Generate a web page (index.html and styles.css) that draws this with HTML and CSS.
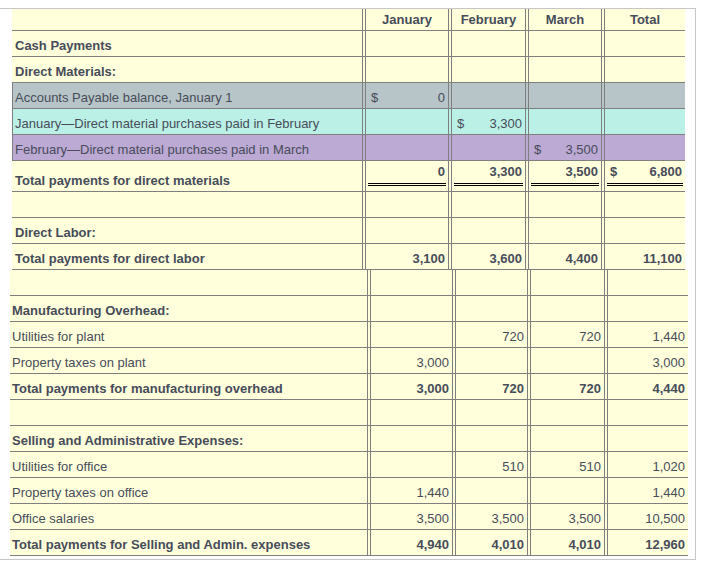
FILE: index.html
```html
<!DOCTYPE html>
<html>
<head>
<meta charset="utf-8">
<link rel="stylesheet" href="styles.css">
</head>
<body>
<div class="frame">
  <div class="tbl t1">
    <div class="row head">
      <div class="c lab"></div>
      <div class="c n jan">January</div>
      <div class="c n feb">February</div>
      <div class="c n mar">March</div>
      <div class="c n tot">Total</div>
    </div>
    <div class="row">
      <div class="c lab b">Cash Payments</div>
      <div class="c n jan"></div><div class="c n feb"></div><div class="c n mar"></div><div class="c n tot"></div>
    </div>
    <div class="row">
      <div class="c lab b">Direct Materials:</div>
      <div class="c n jan"></div><div class="c n feb"></div><div class="c n mar"></div><div class="c n tot"></div>
    </div>
    <div class="row shade gray">
      <div class="c lab">Accounts Payable balance, January 1</div>
      <div class="c n jan dol"><span>$</span><span>0</span></div>
      <div class="c n feb"></div><div class="c n mar"></div><div class="c n tot"></div>
    </div>
    <div class="row shade cyan">
      <div class="c lab">January—Direct material purchases paid in February</div>
      <div class="c n jan"></div>
      <div class="c n feb dol"><span>$</span><span>3,300</span></div>
      <div class="c n mar"></div><div class="c n tot"></div>
    </div>
    <div class="row shade purple">
      <div class="c lab">February—Direct material purchases paid in March</div>
      <div class="c n jan"></div>
      <div class="c n feb"></div>
      <div class="c n mar dol"><span>$</span><span>3,500</span></div>
      <div class="c n tot"></div>
    </div>
    <div class="row total">
      <div class="c lab b">Total payments for direct materials</div>
      <div class="c n jan b"><div class="val">0</div><div class="dbl"></div></div>
      <div class="c n feb b"><div class="val">3,300</div><div class="dbl"></div></div>
      <div class="c n mar b"><div class="val">3,500</div><div class="dbl"></div></div>
      <div class="c n tot b"><div class="val dolv"><span>$</span><span>6,800</span></div><div class="dbl"></div></div>
    </div>
    <div class="row">
      <div class="c lab"></div>
      <div class="c n jan"></div><div class="c n feb"></div><div class="c n mar"></div><div class="c n tot"></div>
    </div>
    <div class="row">
      <div class="c lab b">Direct Labor:</div>
      <div class="c n jan"></div><div class="c n feb"></div><div class="c n mar"></div><div class="c n tot"></div>
    </div>
    <div class="row">
      <div class="c lab b">Total payments for direct labor</div>
      <div class="c n jan b">3,100</div>
      <div class="c n feb b">3,600</div>
      <div class="c n mar b">4,400</div>
      <div class="c n tot b">11,100</div>
    </div>
  </div>

  <div class="tbl t2">
    <div class="row">
      <div class="c lab"></div>
      <div class="c n jan"></div><div class="c n feb"></div><div class="c n mar"></div><div class="c n tot"></div>
    </div>
    <div class="row">
      <div class="c lab b">Manufacturing Overhead:</div>
      <div class="c n jan"></div><div class="c n feb"></div><div class="c n mar"></div><div class="c n tot"></div>
    </div>
    <div class="row">
      <div class="c lab">Utilities for plant</div>
      <div class="c n jan"></div>
      <div class="c n feb">720</div>
      <div class="c n mar">720</div>
      <div class="c n tot">1,440</div>
    </div>
    <div class="row">
      <div class="c lab">Property taxes on plant</div>
      <div class="c n jan">3,000</div>
      <div class="c n feb"></div>
      <div class="c n mar"></div>
      <div class="c n tot">3,000</div>
    </div>
    <div class="row">
      <div class="c lab b">Total payments for manufacturing overhead</div>
      <div class="c n jan b">3,000</div>
      <div class="c n feb b">720</div>
      <div class="c n mar b">720</div>
      <div class="c n tot b">4,440</div>
    </div>
    <div class="row">
      <div class="c lab"></div>
      <div class="c n jan"></div><div class="c n feb"></div><div class="c n mar"></div><div class="c n tot"></div>
    </div>
    <div class="row">
      <div class="c lab b">Selling and Administrative Expenses:</div>
      <div class="c n jan"></div><div class="c n feb"></div><div class="c n mar"></div><div class="c n tot"></div>
    </div>
    <div class="row">
      <div class="c lab">Utilities for office</div>
      <div class="c n jan"></div>
      <div class="c n feb">510</div>
      <div class="c n mar">510</div>
      <div class="c n tot">1,020</div>
    </div>
    <div class="row">
      <div class="c lab">Property taxes on office</div>
      <div class="c n jan">1,440</div>
      <div class="c n feb"></div>
      <div class="c n mar"></div>
      <div class="c n tot">1,440</div>
    </div>
    <div class="row">
      <div class="c lab">Office salaries</div>
      <div class="c n jan">3,500</div>
      <div class="c n feb">3,500</div>
      <div class="c n mar">3,500</div>
      <div class="c n tot">10,500</div>
    </div>
    <div class="row">
      <div class="c lab b">Total payments for Selling and Admin. expenses</div>
      <div class="c n jan b">4,940</div>
      <div class="c n feb b">4,010</div>
      <div class="c n mar b">4,010</div>
      <div class="c n tot b">12,960</div>
    </div>
  </div>
</div>
</body>
</html>
```

FILE: styles.css
```css
html, body {
  margin: 0;
  padding: 0;
  background: #ffffff;
}

body {
  font-family: "Liberation Sans", Arial, sans-serif;
  font-size: 13px;
  color: #474c59;
}

.frame {
  box-sizing: border-box;
  margin-top: 8px;
  width: 696px;
  border-top: 1px solid #c6c6c6;
  border-right: 1px solid #c6c6c6;
  border-bottom: 1px solid #c6c6c6;
  padding-bottom: 3px;
}

.tbl {
  background: #ffffdc;
}

.t1 {
  margin-left: 12px;
  width: 673px;
}

.t2 {
  margin-left: 10px;
  width: 678px;
}

.row {
  display: flex;
  box-sizing: border-box;
  height: 26px;
  border-bottom: 1px solid #7f7f7f;
}

.row.head {
  height: 22px;
}

.row.total {
  height: 31px;
}

.c {
  box-sizing: border-box;
  display: flex;
  align-items: flex-end;
  line-height: 15px;
  padding: 0 3px 3px 3px;
  white-space: nowrap;
}

.b {
  font-weight: bold;
}

.lab {
  border-right: 1px solid #7f7f7f;
}

.t2 .lab {
  padding-left: 2px;
}

.n {
  margin-left: 2px;
  border-left: 1px solid #7f7f7f;
  border-right: 1px solid #7f7f7f;
  justify-content: flex-end;
}

.n.tot {
  border-right: none;
}

.t1 .lab { width: 351px; }
.t1 .jan { width: 84px; }
.t1 .feb { width: 75px; }
.t1 .mar { width: 74px; }
.t1 .tot { width: 81px; }

.t2 .lab { width: 358px; }
.t2 .jan { width: 83px; }
.t2 .feb { width: 73px; }
.t2 .mar { width: 75px; }
.t2 .tot { width: 81px; }

.head .n {
  justify-content: center;
  font-weight: bold;
}

.shade .lab {
  border-left: 1px solid #7f7f7f;
  padding-left: 2px;
}

.gray { background: #b7c5c8; }
.cyan { background: #bbf0e6; }
.purple { background: #bca9d4; }

.dol {
  justify-content: space-between;
  padding-left: 5px;
}

.total .n {
  flex-direction: column;
  align-items: stretch;
  justify-content: flex-start;
  padding: 3px 0 0 0;
}

.total .val {
  text-align: right;
  padding: 0 3px;
  line-height: 15px;
}

.total .dolv {
  display: flex;
  justify-content: space-between;
  padding-left: 5px;
}

.dbl {
  margin: 4px 2px 0 2px;
  height: 1px;
  border-top: 1px solid #000;
  border-bottom: 1px solid #000;
}
```
